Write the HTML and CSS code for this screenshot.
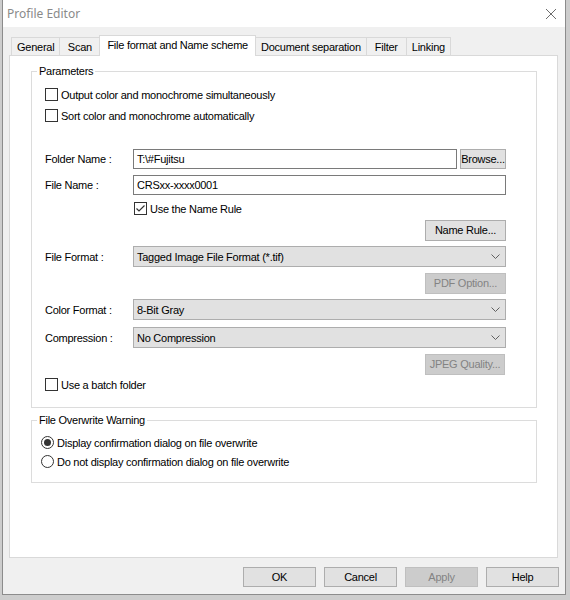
FILE: index.html
```html
<!DOCTYPE html>
<html lang="en">
<head>
    <meta charset="UTF-8">
    <title>Profile Editor</title>
    <link rel="stylesheet" href="styles.css">
</head>
<body>

<div class="window">
    <div class="titlebar">
        <span class="title">Profile Editor</span>
        <svg class="close" width="12" height="12" viewBox="0 0 12 12">
            <path d="M1 1 L11 11 M11 1 L1 11" stroke="#6d6d6d" stroke-width="1" fill="none"/>
        </svg>
    </div>

    <div class="tabs">
        <div class="tab">General</div>
        <div class="tab">Scan</div>
        <div class="tab active">File format and Name scheme</div>
        <div class="tab">Document separation</div>
        <div class="tab">Filter</div>
        <div class="tab">Linking</div>
    </div>

    <div class="panel">
        <fieldset class="group params">
            <legend>Parameters</legend>

            <div class="row check-row r1">
                <span class="checkbox"></span>
                <span>Output color and monochrome simultaneously</span>
            </div>
            <div class="row check-row r2">
                <span class="checkbox"></span>
                <span>Sort color and monochrome automatically</span>
            </div>

            <div class="row field-row r3">
                <span class="label">Folder Name :</span>
                <div class="field split">
                    <div class="textbox short">T:\#Fujitsu</div>
                    <div class="button browse">Browse...</div>
                </div>
            </div>
            <div class="row field-row r4">
                <span class="label">File Name :</span>
                <div class="field">
                    <div class="textbox">CRSxx-xxxx0001</div>
                </div>
            </div>
            <div class="row field-row r5">
                <span class="label"></span>
                <div class="field check-row">
                    <span class="checkbox checked">
                        <svg width="11" height="11" viewBox="0 0 11 11">
                            <path d="M1.5 5.5 L4 8 L9.5 2.5" stroke="#333" stroke-width="1.2" fill="none"/>
                        </svg>
                    </span>
                    <span>Use the Name Rule</span>
                </div>
            </div>
            <div class="row end-row r6">
                <div class="button side">Name Rule...</div>
            </div>
            <div class="row field-row r7">
                <span class="label">File Format :</span>
                <div class="field">
                    <div class="select">
                        <span>Tagged Image File Format (*.tif)</span>
                        <svg width="9" height="5" viewBox="0 0 9 5"><path d="M0.5 0.5 L4.5 4.5 L8.5 0.5" stroke="#606060" fill="none"/></svg>
                    </div>
                </div>
            </div>
            <div class="row end-row r8">
                <div class="button side disabled">PDF Option...</div>
            </div>
            <div class="row field-row r9">
                <span class="label">Color Format :</span>
                <div class="field">
                    <div class="select">
                        <span>8-Bit Gray</span>
                        <svg width="9" height="5" viewBox="0 0 9 5"><path d="M0.5 0.5 L4.5 4.5 L8.5 0.5" stroke="#606060" fill="none"/></svg>
                    </div>
                </div>
            </div>
            <div class="row field-row r10">
                <span class="label">Compression :</span>
                <div class="field">
                    <div class="select">
                        <span>No Compression</span>
                        <svg width="9" height="5" viewBox="0 0 9 5"><path d="M0.5 0.5 L4.5 4.5 L8.5 0.5" stroke="#606060" fill="none"/></svg>
                    </div>
                </div>
            </div>
            <div class="row end-row r11">
                <div class="button side jpeg disabled">JPEG Quality...</div>
            </div>
            <div class="row check-row r12">
                <span class="checkbox"></span>
                <span>Use a batch folder</span>
            </div>
        </fieldset>

        <fieldset class="group overwrite">
            <legend>File Overwrite Warning</legend>
            <div class="row check-row o1">
                <span class="radio checked"></span>
                <span>Display confirmation dialog on file overwrite</span>
            </div>
            <div class="row check-row o2">
                <span class="radio"></span>
                <span>Do not display confirmation dialog on file overwrite</span>
            </div>
        </fieldset>
    </div>

    <div class="footer">
        <div class="button">OK</div>
        <div class="button">Cancel</div>
        <div class="button disabled">Apply</div>
        <div class="button">Help</div>
    </div>
</div>

</body>
</html>
```

FILE: styles.css
```css
body {
    margin: 0;
    background-color: #cdcdcd;
    font-family: "Liberation Sans", Arial, sans-serif;
    font-size: 11px;
    letter-spacing: -0.25px;
    color: #000;
}
.window {
    box-sizing: border-box;
    width: 564px;
    height: 595px;
    margin-left: 2px;
    background-color: #f0f0f0;
    border: 1px solid #8c8c8c;
    border-top: 0;
}
.titlebar {
    height: 27px;
    background-color: #fff;
    display: flex;
    align-items: center;
    justify-content: space-between;
    padding: 0 8px 0 4px;
}
.title {
    font-family: "Noto Sans", sans-serif;
    font-size: 12px;
    letter-spacing: 0;
    color: #8a8a8a;
}
.close {
    margin-top: 1px;
}

/* tabs */
.tabs {
    display: flex;
    align-items: flex-end;
    height: 20px;
    margin-top: 8px;
    padding-left: 8px;
}
.tab {
    box-sizing: border-box;
    min-width: 40px;
    height: 18px;
    line-height: 18px;
    padding: 0 5px;
    text-align: center;
    border: 1px solid #d9d9d9;
    border-bottom: 0;
    border-right: 0;
    background-color: #f0f0f0;
}
.tab:last-child {
    border-right: 1px solid #d9d9d9;
}
.tab.active {
    position: relative;
    z-index: 1;
    height: 21px;
    line-height: 19px;
    margin-bottom: -1px;
    margin-right: -1px;
    padding: 0 7px;
    background-color: #fff;
    border-right: 1px solid #d9d9d9;
}

/* panel */
.panel {
    box-sizing: border-box;
    width: 549px;
    height: 503px;
    margin-left: 6px;
    background-color: #fff;
    border: 1px solid #d9d9d9;
    overflow: hidden;
}
.group {
    box-sizing: border-box;
    width: 506px;
    margin: 8px 0 0 21px;
    border: 1px solid #dcdcdc;
    padding: 0 29px 16px 13px;
}
.group legend {
    padding: 0 2px;
    margin-left: -8px;
    line-height: 14px;
}
.row {
    display: flex;
    align-items: center;
}
.check-row {
    display: flex;
    align-items: center;
    gap: 3px;
    height: 13px;
}
.checkbox, .radio {
    box-sizing: border-box;
    width: 13px;
    height: 13px;
    border: 1px solid #333;
    background-color: #fff;
    flex: none;
    display: flex;
    align-items: center;
    justify-content: center;
}
.radio {
    border-radius: 50%;
}
.radio.checked::after {
    content: "";
    width: 7px;
    height: 7px;
    border-radius: 50%;
    background-color: #333;
}
.field-row {
    height: 20px;
}
.label {
    width: 88px;
    flex: none;
}
.field {
    width: 373px;
}
.split {
    display: flex;
    gap: 3px;
}
.textbox {
    box-sizing: border-box;
    height: 20px;
    line-height: 18px;
    padding: 0 3px;
    border: 1px solid #7a7a7a;
    background-color: #fff;
}
.textbox.short {
    width: 324px;
}
.select {
    box-sizing: border-box;
    height: 21px;
    display: flex;
    align-items: center;
    justify-content: space-between;
    padding: 0 5px 0 3px;
    border: 1px solid #adadad;
    background-color: #e1e1e1;
}
.button {
    box-sizing: border-box;
    height: 21px;
    line-height: 19px;
    text-align: center;
    border: 1px solid #adadad;
    background-color: #e1e1e1;
}
.button.disabled {
    background-color: #cccccc;
    border-color: #bfbfbf;
    color: #838383;
}
.browse {
    width: 46px;
    height: 20px;
    line-height: 18px;
}
.end-row {
    justify-content: flex-end;
    width: 461px;
}
.side {
    width: 81px;
}
.jpeg {
    width: 80px;
    margin-right: 1px;
}

/* vertical rhythm of the parameters group */
.r1 { margin-top: 10px; }
.r2 { margin-top: 8px; }
.r3 { margin-top: 27px; }
.r4 { margin-top: 6px; }
.r5 { margin-top: 7px; height: 13px; }
.r5 .field { margin-left: 1px; }
.r6 { margin-top: 5px; }
.r7 { margin-top: 5px; height: 21px; }
.r8 { margin-top: 6px; }
.r9 { margin-top: 5px; height: 21px; }
.r10 { margin-top: 7px; height: 21px; }
.r11 { margin-top: 6px; }
.r12 { margin-top: 3px; }

.overwrite {
    margin-top: 5px;
    padding-bottom: 14px;
}
.overwrite .row {
    margin-left: -4px;
}
.o1 { margin-top: 9px; }
.o2 { margin-top: 6px; }

/* dialog buttons */
.footer {
    display: flex;
    justify-content: flex-end;
    gap: 8px;
    margin-top: 9px;
    padding-right: 6px;
}
.footer .button {
    width: 73px;
    height: 20px;
    line-height: 18px;
}
```
